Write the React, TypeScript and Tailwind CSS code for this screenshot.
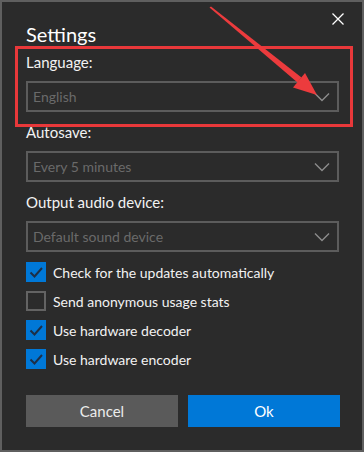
import { useState } from 'react'

const font = { fontFamily: 'Lato, "Noto Sans", sans-serif' }

type SelectProps = { value: string }

function Select({ value }: SelectProps) {
  return (
    <div className="flex h-[31px] w-[313px] items-center justify-between border-2 border-[#5c5c5c] pl-[5px] pr-[6px]">
      <span className="text-[14px] text-[#6a6a6a]">{value}</span>
      <svg width="16" height="10" viewBox="0 0 16 10" className="mr-[1px]">
        <path d="M1 1.5 L8 8.5 L15 1.5" fill="none" stroke="#8c8c8c" strokeWidth="1.4" />
      </svg>
    </div>
  )
}

type CheckProps = { label: string; checked: boolean; onToggle: () => void }

function Check({ label, checked, onToggle }: CheckProps) {
  return (
    <button onClick={onToggle} className="flex h-5 items-center gap-[7px] text-left">
      {checked ? (
        <span className="flex h-5 w-5 items-center justify-center bg-[#0078d7]">
          <svg width="20" height="20" viewBox="0 0 20 20">
            <path d="M4.5 10.5 L8.5 14.5 L16 6" fill="none" stroke="#1d2f47" strokeWidth="2" />
          </svg>
        </span>
      ) : (
        <span className="h-5 w-5 border-2 border-[#636363]" />
      )}
      <span className="text-[14px] text-[#f2f2f2]">{label}</span>
    </button>
  )
}

export default function App() {
  const [opts, setOpts] = useState([
    { label: 'Check for the updates automatically', checked: true },
    { label: 'Send anonymous usage stats', checked: false },
    { label: 'Use hardware decoder', checked: true },
    { label: 'Use hardware encoder', checked: true },
  ])

  const toggle = (i: number) =>
    setOpts(opts.map((o, j) => (j === i ? { ...o, checked: !o.checked } : o)))

  return (
    <div
      style={font}
      className="relative flex h-[452px] w-[364px] flex-col border-2 border-[#5f5f5f] bg-[#2b2b2b] pl-[24px] pt-[18px]"
    >
      <button className="absolute right-[18px] top-[11px]">
        <svg width="12" height="12" viewBox="0 0 12 12">
          <path d="M0.5 0.5 L11.5 11.5 M11.5 0.5 L0.5 11.5" stroke="#ffffff" strokeWidth="1.3" />
        </svg>
      </button>

      <h1 className="h-7 text-[20px] leading-7 text-white">Settings</h1>

      <label className="mt-1 h-5 text-[15px] leading-5 text-[#f2f2f2]">Language:</label>
      <div className="mt-[9px]">
        <Select value="English" />
      </div>

      <label className="mt-[10px] h-5 text-[15px] leading-5 text-[#f2f2f2]">Autosave:</label>
      <div className="mt-[9px]">
        <Select value="Every 5 minutes" />
      </div>

      <label className="mt-[10px] h-5 text-[15px] leading-5 text-[#f2f2f2]">Output audio device:</label>
      <div className="mt-[9px]">
        <Select value="Default sound device" />
      </div>

      <div className="mt-[10px] flex flex-col gap-[9px]">
        {opts.map((o, i) => (
          <Check key={o.label} label={o.label} checked={o.checked} onToggle={() => toggle(i)} />
        ))}
      </div>

      <div className="mt-[26px] flex gap-[10px]">
        <button className="h-8 w-[152px] bg-[#5a5a5a] text-[15px] text-[#ececec]">Cancel</button>
        <button className="h-8 w-[152px] bg-[#0078d7] text-[15px] text-white">Ok</button>
      </div>

      {/* annotation: highlight box */}
      <div className="pointer-events-none absolute left-[13px] top-[44px] h-[81px] w-[338px] border-[3px] border-[#e8383a]" />

      {/* annotation: arrow */}
      <svg
        className="pointer-events-none absolute left-[-2px] top-[-2px]"
        width="364"
        height="452"
        viewBox="0 0 364 452"
      >
        <polygon points="209.5,7.5 211,6.5 301.5,77.5 297.5,82.5" fill="#ec3b3d" />
        <polygon points="293,87.5 305,73 317,95" fill="#ec3b3d" />
      </svg>
    </div>
  )
}
